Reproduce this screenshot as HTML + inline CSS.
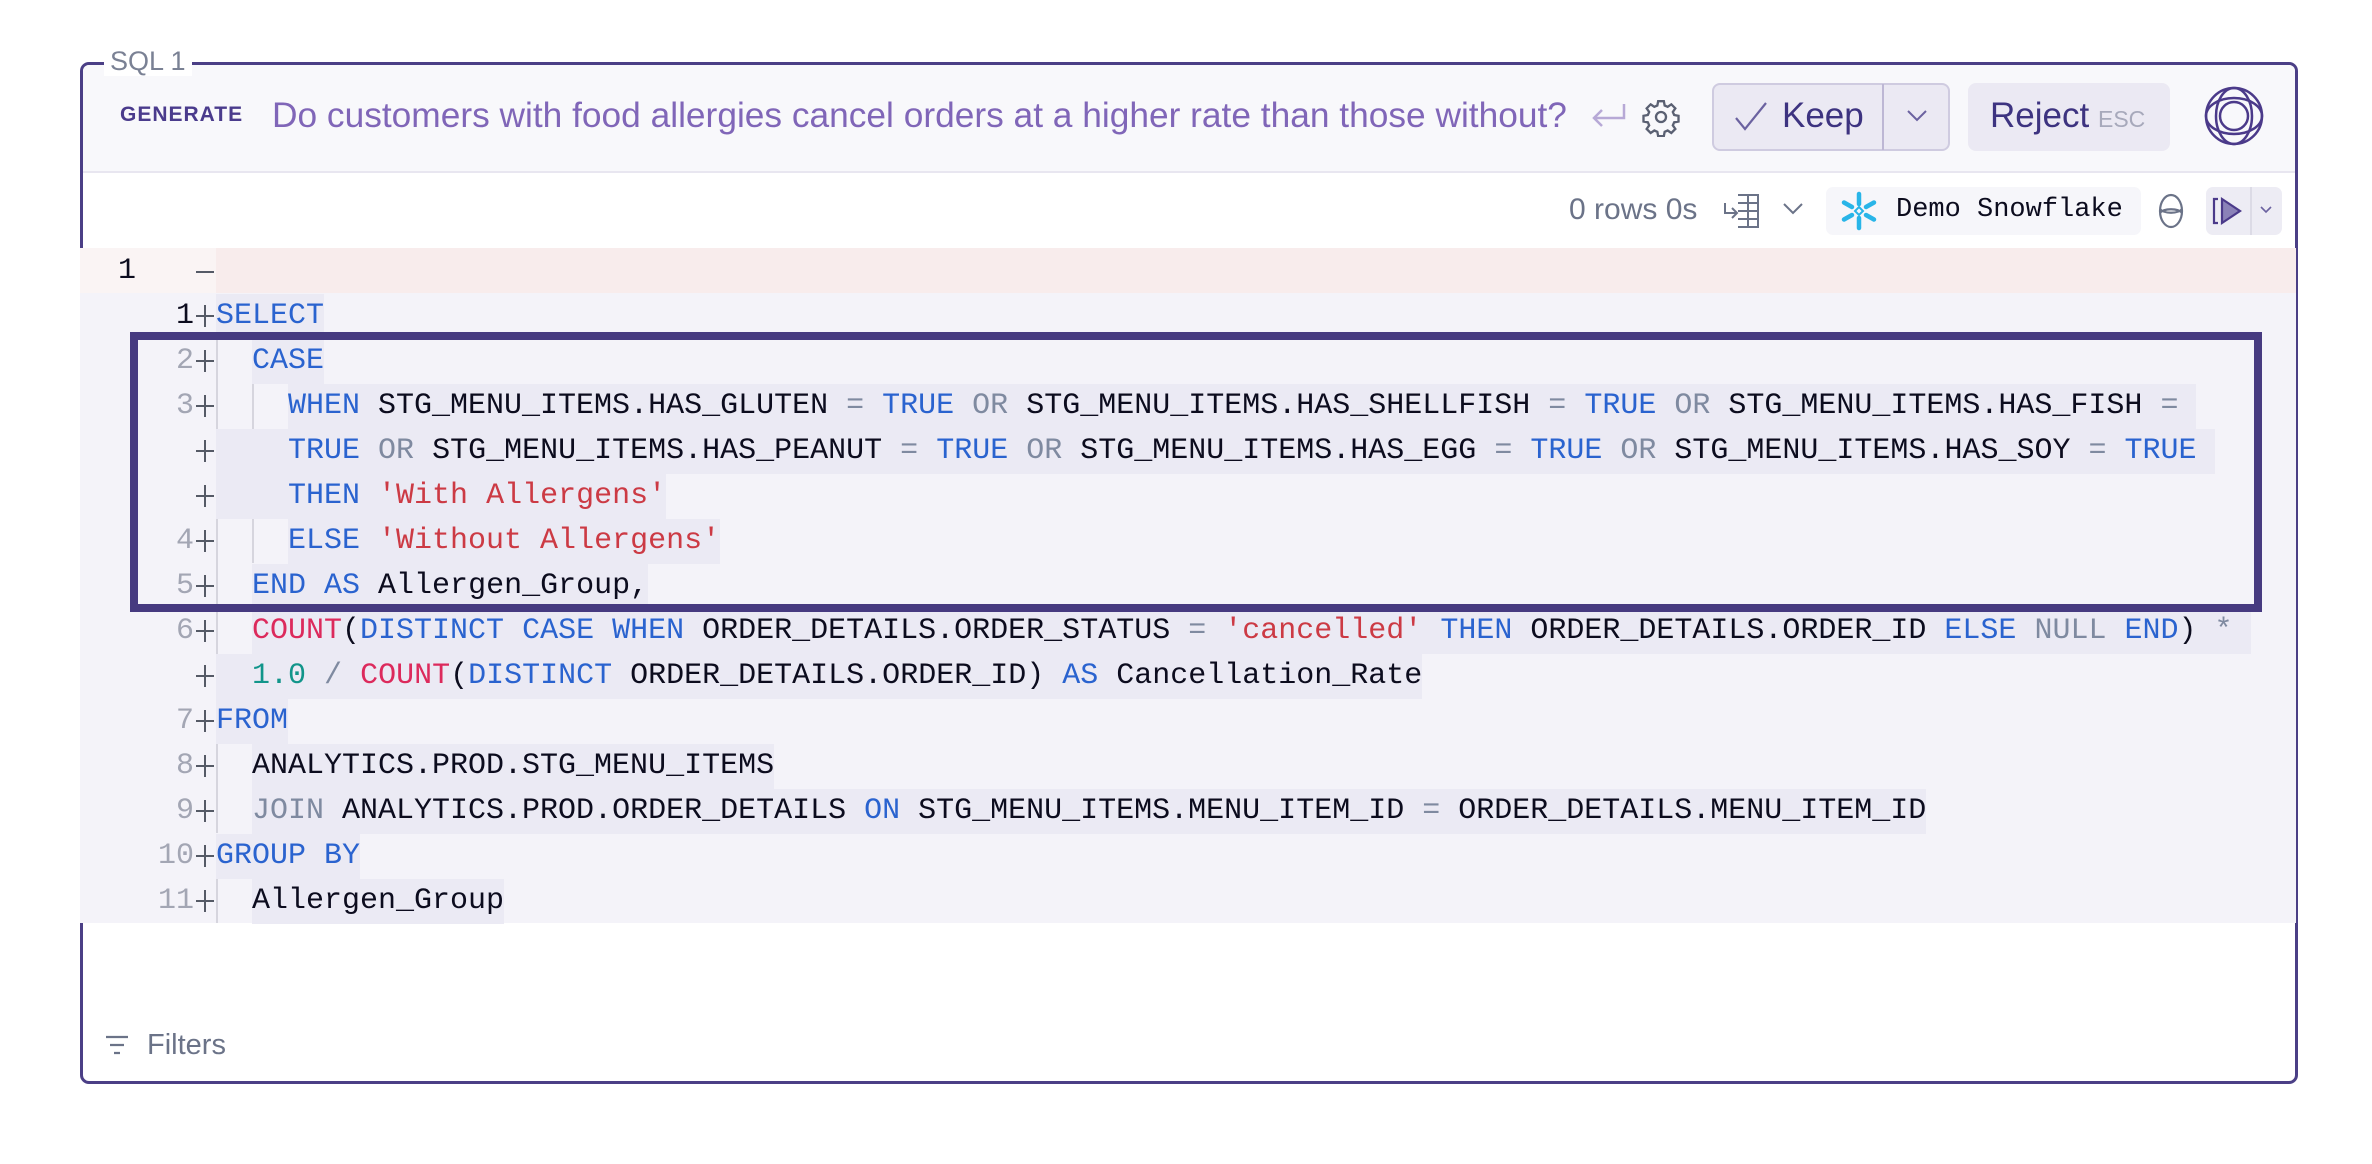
<!DOCTYPE html>
<html><head><meta charset="utf-8"><style>
*{margin:0;padding:0;box-sizing:border-box}
body{width:2372px;height:1164px;background:#fff;position:relative;overflow:hidden;font-family:"Liberation Sans",sans-serif}
.panel{position:absolute;left:80px;top:62px;width:2218px;height:1022px;border:3px solid #4b3f86;border-radius:9px;overflow:hidden;background:#fff}
.hdr{position:absolute;left:0;top:0;right:0;height:108px;background:#f8f8fb;border-bottom:2px solid #e8e6f0}
.lbl{position:absolute;left:104px;top:46px;padding:0 6px;background:#fff;color:#7a8194;font-size:27px;line-height:30px}
.a{position:absolute;white-space:pre}
.row{position:absolute;left:80px;width:2216px;height:45px;background:#f4f3f9}
.code{position:absolute;font-family:"Liberation Mono",monospace;font-size:30px;line-height:45px;height:45px;white-space:pre;color:#0c0c1e;background:#ebeaf4}
.num{position:absolute;font-family:"Liberation Mono",monospace;font-size:30px;line-height:45px;color:#a3a6b4;text-align:right;width:80px;left:114px}
.pl{position:absolute;left:194px;width:22px;height:45px}
.pl:before{content:"";position:absolute;left:2px;right:2px;top:21px;height:2px;background:#555a66}
.pl:after{content:"";position:absolute;left:10px;width:2px;top:11px;height:22px;background:#555a66}
.g1{position:absolute;left:216px;width:2px;background:#d6d5de}
.g2{position:absolute;left:252px;width:2px;background:#d6d5de}
.k{color:#2a63cf}.o{color:#7f8aa0}.f{color:#dc2a5c}.s{color:#cc3a44}.n{color:#11958a}
</style></head><body>
<div class="panel">
 <div class="hdr"></div>
</div>
<div class="lbl">SQL 1</div>
<div class="a" style="left:120px;top:102px;font-size:21px;font-weight:bold;color:#4a3b8c;letter-spacing:1px;line-height:26px">GENERATE</div>
<div class="a" style="left:272px;top:95px;font-size:35.3px;color:#8066b8;line-height:42px">Do customers with food allergies cancel orders at a higher rate than those without?</div>
<svg class="a" style="left:1588px;top:100px" width="42" height="34" viewBox="0 0 42 34"><path d="M36 4v14H6M14 10l-8 8 8 8" fill="none" stroke="#b7a9d6" stroke-width="2.5"/></svg>
<svg class="a" style="left:1641px;top:97px" width="40" height="40" viewBox="0 0 24 24"><path fill="none" stroke="#5a6072" stroke-width="1.4" d="M10.3 2.5h3.4l.5 2.6 1.8.8 2.2-1.5 2.4 2.4-1.5 2.2.8 1.8 2.6.5v3.4l-2.6.5-.8 1.8 1.5 2.2-2.4 2.4-2.2-1.5-1.8.8-.5 2.6h-3.4l-.5-2.6-1.8-.8-2.2 1.5-2.4-2.4 1.5-2.2-.8-1.8-2.6-.5v-3.4l2.6-.5.8-1.8-1.5-2.2 2.4-2.4 2.2 1.5 1.8-.8z"/><circle cx="12" cy="12" r="3" fill="none" stroke="#5a6072" stroke-width="1.4"/></svg>
<div class="a" style="left:1712px;top:83px;width:238px;height:68px;background:#ebe9f3;border:2px solid #cfcbe0;border-radius:8px"></div>
<div class="a" style="left:1882px;top:84px;width:2px;height:66px;background:#bdb7d4"></div>
<svg class="a" style="left:1733px;top:100px" width="36" height="34" viewBox="0 0 36 34"><path d="M3 18l9 11L33 3" fill="none" stroke="#6b62a0" stroke-width="2.2"/></svg>
<div class="a" style="left:1782px;top:96px;font-size:35px;color:#3d3380;line-height:40px">Keep</div>
<svg class="a" style="left:1905px;top:108px" width="24" height="16" viewBox="0 0 24 16"><path d="M3 3l9 9 9-9" fill="none" stroke="#6b62a0" stroke-width="2"/></svg>
<div class="a" style="left:1968px;top:83px;width:202px;height:68px;background:#ebe9f3;border-radius:8px"></div>
<div class="a" style="left:1990px;top:96px;font-size:35px;color:#3d3380;line-height:40px">Reject</div>
<div class="a" style="left:2098px;top:106px;font-size:23px;color:#a7a9bb;line-height:26px">ESC</div>
<svg class="a" style="left:2200px;top:82px" width="68" height="68" viewBox="0 0 68 68" fill="none" stroke="#4b3a8a" stroke-width="2.5"><circle cx="34" cy="34" r="28"/><ellipse cx="34" cy="34" rx="28" ry="18"/><ellipse cx="34" cy="34" rx="18" ry="28"/><circle cx="34" cy="34" r="14"/></svg>

<div class="a" style="left:1569px;top:192px;font-size:30px;color:#6b7388;line-height:36px">0 rows 0s</div>
<svg class="a" style="left:1722px;top:193px" width="40" height="36" viewBox="0 0 40 36" fill="none" stroke="#6b7388" stroke-width="2"><path d="M16 2h20v32H16M16 10h20M16 18h20M16 26h20M26 2v32M3 10v10h12M10 15l5 5-5 5"/></svg>
<svg class="a" style="left:1781px;top:201px" width="24" height="16" viewBox="0 0 24 16"><path d="M3 3l9 9 9-9" fill="none" stroke="#6b7388" stroke-width="2"/></svg>
<div class="a" style="left:1826px;top:187px;width:315px;height:48px;background:#f6f6fa;border-radius:7px"></div>
<svg class="a" style="left:1839px;top:191px" width="40" height="40" viewBox="-20 -20 40 40" stroke="#29b5e8" stroke-width="4.5" stroke-linecap="round" fill="none"><path d="M0-17v10M0 7v10M-15-8.5l8 4.5M15 8.5l-8-4.5M-15 8.5l8-4.5M15-8.5l-8 4.5"/><path d="M0-4l4 4-4 4-4-4z" stroke-width="2"/></svg>
<div class="a" style="left:1896px;top:193px;font-family:'Liberation Mono',monospace;font-size:27px;color:#0c0c1e;line-height:34px">Demo Snowflake</div>
<svg class="a" style="left:2157px;top:192px" width="28" height="38" viewBox="0 0 28 38" fill="none" stroke="#6b7388" stroke-width="2.2"><ellipse cx="14" cy="19" rx="11" ry="16"/><path d="M3 17c4 5 18 5 22 0M3 21c4-5 18-5 22 0"/></svg>
<div class="a" style="left:2206px;top:187px;width:76px;height:48px;background:#edecf4;border-radius:7px"></div>
<div class="a" style="left:2250px;top:187px;width:2px;height:48px;background:#dcdbe6"></div>
<svg class="a" style="left:2210px;top:196px" width="34" height="30" viewBox="0 0 34 30" fill="none" stroke="#4b3a8a" stroke-width="2.2"><path d="M8 3H4v24h4"/><path d="M12 3l18 12-18 12z" fill="#8b82b8"/></svg>
<svg class="a" style="left:2259px;top:205px" width="14" height="10" viewBox="0 0 14 10"><path d="M2 2l5 5 5-5" fill="none" stroke="#6b62a0" stroke-width="1.6"/></svg>

<div class="row" style="top:248px;background:#f8ecec"></div>
<div class="a" style="left:80px;top:248px;width:136px;height:45px;background:#faf4f4"></div>
<div class="a" style="left:118px;top:249px;font-family:'Liberation Mono',monospace;font-size:30px;line-height:45px;color:#0c0c1e">1</div>
<div class="a" style="left:196px;top:271px;width:18px;height:2px;background:#555a66"></div>

<div class="row" style="top:293px;height:630px"></div>
<div class="g1" style="top:338px;height:270px"></div>
<div class="g2" style="top:383px;height:180px"></div>
<div class="g1" style="top:608px;height:90px"></div>
<div class="g1" style="top:743px;height:90px"></div>
<div class="g1" style="top:878px;height:45px"></div>

<div class="num" style="top:294px;color:#0c0c1e">1</div><div class="pl" style="top:294px"></div>
<div class="code k" style="left:216px;top:294px">SELECT</div>

<div class="num" style="top:339px">2</div><div class="pl" style="top:339px"></div>
<div class="code k" style="left:252px;top:339px">CASE</div>

<div class="num" style="top:384px">3</div><div class="pl" style="top:384px"></div>
<div class="code" style="left:288px;top:384px"><span class="k">WHEN</span> STG_MENU_ITEMS.HAS_GLUTEN <span class="o">=</span> <span class="k">TRUE</span> <span class="o">OR</span> STG_MENU_ITEMS.HAS_SHELLFISH <span class="o">=</span> <span class="k">TRUE</span> <span class="o">OR</span> STG_MENU_ITEMS.HAS_FISH <span class="o">=</span> </div>

<div class="pl" style="top:429px"></div>
<div class="code" style="left:216px;top:429px">    <span class="k">TRUE</span> <span class="o">OR</span> STG_MENU_ITEMS.HAS_PEANUT <span class="o">=</span> <span class="k">TRUE</span> <span class="o">OR</span> STG_MENU_ITEMS.HAS_EGG <span class="o">=</span> <span class="k">TRUE</span> <span class="o">OR</span> STG_MENU_ITEMS.HAS_SOY <span class="o">=</span> <span class="k">TRUE</span> </div>

<div class="pl" style="top:474px"></div>
<div class="code" style="left:216px;top:474px">    <span class="k">THEN</span> <span class="s">'With Allergens'</span></div>

<div class="num" style="top:519px">4</div><div class="pl" style="top:519px"></div>
<div class="code" style="left:288px;top:519px"><span class="k">ELSE</span> <span class="s">'Without Allergens'</span></div>

<div class="num" style="top:564px">5</div><div class="pl" style="top:564px"></div>
<div class="code" style="left:252px;top:564px"><span class="k">END</span> <span class="k">AS</span> Allergen_Group,</div>

<div class="num" style="top:609px">6</div><div class="pl" style="top:609px"></div>
<div class="code" style="left:252px;top:609px"><span class="f">COUNT</span>(<span class="k">DISTINCT</span> <span class="k">CASE</span> <span class="k">WHEN</span> ORDER_DETAILS.ORDER_STATUS <span class="o">=</span> <span class="s">'cancelled'</span> <span class="k">THEN</span> ORDER_DETAILS.ORDER_ID <span class="k">ELSE</span> <span class="o">NULL</span> <span class="k">END</span>) <span class="o">*</span> </div>

<div class="pl" style="top:654px"></div>
<div class="code" style="left:216px;top:654px">  <span class="n">1.0</span> <span class="o">/</span> <span class="f">COUNT</span>(<span class="k">DISTINCT</span> ORDER_DETAILS.ORDER_ID) <span class="k">AS</span> Cancellation_Rate</div>

<div class="num" style="top:699px">7</div><div class="pl" style="top:699px"></div>
<div class="code k" style="left:216px;top:699px">FROM</div>

<div class="num" style="top:744px">8</div><div class="pl" style="top:744px"></div>
<div class="code" style="left:252px;top:744px">ANALYTICS.PROD.STG_MENU_ITEMS</div>

<div class="num" style="top:789px">9</div><div class="pl" style="top:789px"></div>
<div class="code" style="left:252px;top:789px"><span class="o">JOIN</span> ANALYTICS.PROD.ORDER_DETAILS <span class="k">ON</span> STG_MENU_ITEMS.MENU_ITEM_ID <span class="o">=</span> ORDER_DETAILS.MENU_ITEM_ID</div>

<div class="num" style="top:834px">10</div><div class="pl" style="top:834px"></div>
<div class="code k" style="left:216px;top:834px">GROUP BY</div>

<div class="num" style="top:879px">11</div><div class="pl" style="top:879px"></div>
<div class="code" style="left:252px;top:879px">Allergen_Group</div>

<div class="a" style="left:130px;top:332px;width:2132px;height:280px;border:8px solid #463a80"></div>

<svg class="a" style="left:104px;top:1034px" width="26" height="22" viewBox="0 0 26 22" stroke="#6b7388" stroke-width="2.2"><path d="M2 3h22M6 11h14M10 19h6"/></svg>
<div class="a" style="left:147px;top:1028px;font-size:29px;color:#6b7388;line-height:34px">Filters</div>
</body></html>
